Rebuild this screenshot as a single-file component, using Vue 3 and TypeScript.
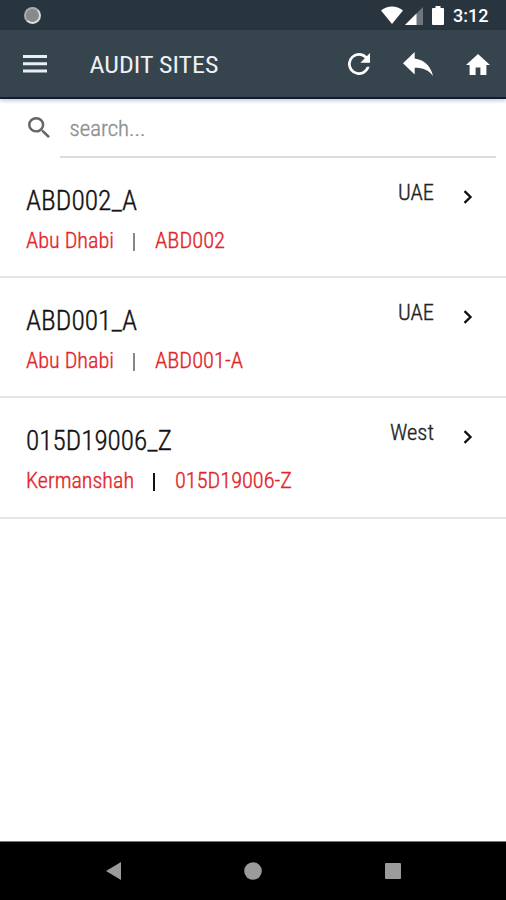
<script setup lang="ts">
interface Label {
  text: string
  width: number
}

interface Site {
  name: Label
  city: Label
  code: Label
  region: Label
  muted: boolean
}

const sites: Site[] = [
  {
    name: { text: 'ABD002_A', width: 111 },
    city: { text: 'Abu Dhabi', width: 88 },
    code: { text: 'ABD002', width: 70 },
    region: { text: 'UAE', width: 36 },
    muted: true,
  },
  {
    name: { text: 'ABD001_A', width: 111 },
    city: { text: 'Abu Dhabi', width: 88 },
    code: { text: 'ABD001-A', width: 88 },
    region: { text: 'UAE', width: 36 },
    muted: true,
  },
  {
    name: { text: '015D19006_Z', width: 146 },
    city: { text: 'Kermanshah', width: 108 },
    code: { text: '015D19006-Z', width: 117 },
    region: { text: 'West', width: 44 },
    muted: false,
  },
]
</script>

<template>
  <div class="screen">
    <div class="status">
      <span class="spinner"></span>
      <div class="status-icons">
        <svg class="wifi" width="22" height="18" viewBox="0 0 22 18">
          <path d="M0 4.5C6.5-1 15.5-1 22 4.5L11 18Z" fill="#fff" />
        </svg>
        <svg class="signal" width="18" height="18" viewBox="0 0 18 18">
          <path d="M18 0V18H0Z" fill="#6c767c" />
          <path d="M11.5 6.5V18H0Z" fill="#fff" />
        </svg>
        <svg class="battery" width="12" height="19" viewBox="0 0 12 19">
          <path d="M3.5 0h5v2H11q1 0 1 1v15q0 1-1 1H1q-1 0-1-1V3q0-1 1-1h2.500z" fill="#fff" />
        </svg>
        <span class="clock">3:12</span>
      </div>
    </div>

    <header class="bar">
      <svg class="menu" width="24" height="18" viewBox="0 0 24 18">
        <path d="M0 0h24v3H0zM0 7.200h24v3H0zM0 14.500h24v3H0z" fill="#e9eef5" />
      </svg>
      <svg class="fit heading" width="130" height="32">
        <text x="-0.500" y="25" textLength="129" lengthAdjust="spacingAndGlyphs">AUDIT SITES</text>
      </svg>
      <div class="actions">
        <svg width="22" height="22" viewBox="4 4 16 16" preserveAspectRatio="none">
          <path d="M17.650 6.350A7.960 7.960 0 0 0 12 4a8 8 0 1 0 7.730 10h-2.080A6 6 0 1 1 12 6c1.660 0 3.140.690 4.220 1.780L13 11h7V4z" fill="#fff" />
        </svg>
        <svg width="30" height="24" viewBox="3 5 18 13" preserveAspectRatio="none">
          <path d="M10 9V5l-7 7 7 7v-4.100c5 0 8.500 1.600 11 5.100-1-5-4-10-11-11z" transform="translate(0 .67) scale(1 .867)" fill="#fff" />
        </svg>
        <svg width="24" height="21" viewBox="2 3 20 17" preserveAspectRatio="none">
          <path d="M10 20v-6h4v6h5v-8h3L12 3 2 12h3v8z" fill="#fff" />
        </svg>
      </div>
    </header>

    <div class="search">
      <svg class="lens" width="22" height="21" viewBox="3 3 17.500 17.500" preserveAspectRatio="none">
        <path d="M15.500 14h-.790l-.280-.270A6.470 6.470 0 0 0 16 9.500 6.500 6.500 0 1 0 9.500 16c1.610 0 3.090-.590 4.230-1.570l.270.280v.790l5 4.990L20.490 19zm-6 0a4.500 4.500 0 1 1 0-9 4.500 4.500 0 0 1 0 9z" fill="#666" />
      </svg>
      <div class="field">
        <svg class="fit hint" width="80" height="30">
          <text x="-0.500" y="23" textLength="76" lengthAdjust="spacingAndGlyphs">search...</text>
        </svg>
      </div>
    </div>

    <main class="list">
      <section v-for="site in sites" :key="site.name.text" class="row">
        <div class="info">
          <svg class="fit name" :width="site.name.width" height="38">
            <text x="0" y="26.500" :textLength="site.name.width" lengthAdjust="spacingAndGlyphs">{{ site.name.text }}</text>
          </svg>
          <div class="meta">
            <svg class="fit" :width="site.city.width" height="28">
              <text x="0" y="21" :textLength="site.city.width" lengthAdjust="spacingAndGlyphs">{{ site.city.text }}</text>
            </svg>
            <span class="divider" :class="{ muted: site.muted }"></span>
            <svg class="fit" :width="site.code.width" height="28">
              <text x="0" y="21" :textLength="site.code.width" lengthAdjust="spacingAndGlyphs">{{ site.code.text }}</text>
            </svg>
          </div>
        </div>
        <svg class="fit region" :width="site.region.width" height="28">
          <text x="0" y="21" :textLength="site.region.width" lengthAdjust="spacingAndGlyphs">{{ site.region.text }}</text>
        </svg>
        <svg class="chevron" width="10" height="14" viewBox="0 0 10 14">
          <path d="M1.500 1.200L7.500 7l-6 5.800" fill="none" stroke="#111" stroke-width="2.300" />
        </svg>
      </section>
    </main>

    <nav class="nav">
      <svg width="15" height="18" viewBox="0 0 15 18"><path d="M0 9L15 0v18z" fill="#9b9b9b" /></svg>
      <svg width="18" height="18" viewBox="0 0 18 18"><circle cx="9" cy="9" r="8.800" fill="#9b9b9b" /></svg>
      <svg width="16" height="16" viewBox="0 0 16 16"><rect width="16" height="16" rx="1" fill="#9b9b9b" /></svg>
    </nav>
  </div>
</template>

<style>
body {
  margin: 0;
  background: #fff;
}
</style>

<style scoped>
.screen {
  display: flex;
  flex-direction: column;
  width: 506px;
  height: 900px;
  overflow: hidden;
  background: #fff;
  font-family: Roboto, "Liberation Sans", sans-serif;
}
svg {
  display: block;
  flex: none;
}
.fit {
  overflow: visible;
  font-size: 22px;
  font-stretch: 75%;
  font-weight: 300;
  stroke-width: 0.350px;
}
.status {
  display: flex;
  justify-content: space-between;
  box-sizing: border-box;
  flex: none;
  height: 30px;
  padding: 6px 19px 0 24px;
  background: #29353e;
}
.spinner {
  box-sizing: border-box;
  width: 17px;
  height: 17px;
  margin-top: 1px;
  border: 2px solid #a9adaf;
  border-right-color: #d8dadb;
  border-bottom-color: #e2e2e2;
  border-radius: 50%;
  background: #858a8d;
}
.status-icons {
  display: flex;
}
.signal {
  margin: 1px 9px 0 2px;
}
.battery {
  margin-right: 9px;
}
.clock {
  width: 34px;
  font-size: 18px;
  font-weight: 500;
  line-height: 20px;
  color: #fff;
}
.bar {
  display: flex;
  align-items: center;
  box-sizing: border-box;
  flex: none;
  height: 69px;
  padding: 1px 16px 0 23px;
  border-bottom: 2px solid #0d1b3c;
  background: #36444d;
  box-shadow: 0 2px 4px rgba(0, 0, 0, 0.2);
}
.heading {
  margin-left: 43px;
  font-size: 24.500px;
  font-weight: 400;
  fill: #edf1f5;
}
.actions {
  display: flex;
  align-items: center;
  gap: 33px;
  margin-left: auto;
}
.search {
  display: flex;
  box-sizing: border-box;
  flex: none;
  height: 59px;
  padding: 0 10px 0 28px;
}
.lens {
  margin-top: 18px;
}
.field {
  flex: 1;
  margin-left: 10px;
  padding: 14px 0 0 10px;
  border-bottom: 2px solid #ddd;
}
.hint {
  fill: #8e8e8e;
  stroke: #8e8e8e;
}
.list {
  flex: 1;
}
.row {
  display: flex;
  align-items: flex-start;
  box-sizing: border-box;
  height: 120.200px;
  padding: 25px 33px 0 26px;
  border-bottom: 2px solid #e6e6e6;
}
.info {
  flex: 1;
}
.name {
  font-size: 27px;
  fill: #111;
  stroke: #111;
}
.meta {
  display: flex;
  margin-top: 6px;
  fill: #e1262b;
  stroke: #e1262b;
}
.divider {
  width: 2px;
  height: 18px;
  margin: 6px 20px 0 19px;
  background: #111;
}
.divider.muted {
  background: #888;
}
.region {
  margin-top: -4px;
  fill: #222;
  stroke: #222;
}
.chevron {
  margin: 7px 0 0 29px;
}
.nav {
  display: flex;
  align-items: center;
  justify-content: space-between;
  box-sizing: border-box;
  flex: none;
  height: 59px;
  padding: 0 105px 0 106px;
  border-top: 1px solid #777;
  background: #000;
}
</style>
